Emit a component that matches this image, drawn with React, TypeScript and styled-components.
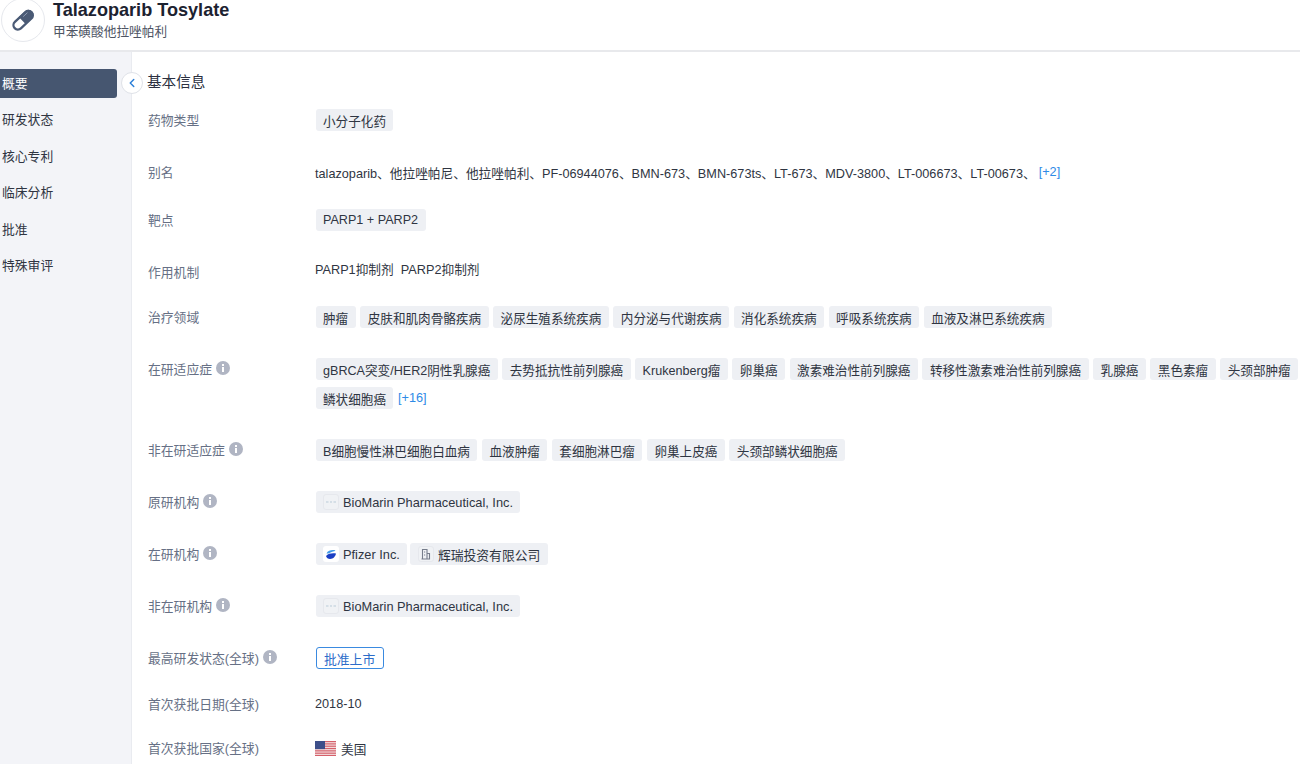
import React from "react";
import styled, {createGlobalStyle} from "styled-components";
import {ChevronLeft} from "lucide-react";

const GlobalStyles = createGlobalStyle`
  html, body {
    margin: 0;
    padding: 0;
    height: 100%;
    overflow: hidden;
    background: #fff;
    font-family: "Liberation Sans", "Noto Sans CJK SC", sans-serif;
  }
`;

const Page = styled.div`
  width: 1300px;
  height: 764px;
  overflow: hidden;
  display: flex;
  flex-direction: column;
`;

const Header = styled.header`
  height: 50px;
  flex: none;
  display: flex;
  align-items: flex-start;
  gap: 8px;
  padding-left: 1px;
  border-bottom: 2px solid #e8e9ec;
  overflow: hidden;
`;

const Avatar = styled.div`
  width: 44px;
  height: 44px;
  margin-top: -2px;
  flex: none;
  box-sizing: border-box;
  border-radius: 50%;
  border: 1px solid #e6e8ed;
  display: flex;
  align-items: center;
  justify-content: center;
`;

const HeaderText = styled.div`
  display: flex;
  flex-direction: column;
`;

const DrugName = styled.div`
  font-size: 18.1px;
  line-height: 20px;
  font-weight: 700;
  color: #1c2230;
`;

const DrugSub = styled.div`
  font-size: 12.7px;
  line-height: 16px;
  margin-top: 4px;
  color: #4d5463;
`;

const Body = styled.div`
  flex: 1;
  display: flex;
  min-height: 0;
`;

const Sidebar = styled.nav`
  width: 132px;
  flex: none;
  position: relative;
  box-sizing: border-box;
  background: #f3f4f8;
  padding: 17px 14px 0 0;
  display: flex;
  flex-direction: column;
  gap: 7.4px;
  border-right: 1px solid #e9ebf0;
`;

const NavItem = styled.div<{$active?: boolean}>`
  height: 29px;
  box-sizing: border-box;
  display: flex;
  align-items: center;
  padding: 0 0 2px 2px;
  font-size: 12.8px;
  border-radius: 0 3px 3px 0;
  color: ${p => (p.$active ? "#fff" : "#2f3542")};
  background: ${p => (p.$active ? "#465670" : "transparent")};
`;

const CollapseButton = styled.div`
  position: absolute;
  right: -12px;
  top: 20px;
  width: 22px;
  height: 22px;
  box-sizing: border-box;
  border-radius: 50%;
  background: #fff;
  border: 1px solid #dfe2e8;
  color: #2b7fd8;
  display: flex;
  align-items: center;
  justify-content: center;
`;

const Content = styled.main`
  flex: 1;
  min-width: 0;
  padding-left: 15px;
`;

const SectionTitle = styled.h2`
  margin: 0;
  height: 57px;
  box-sizing: border-box;
  padding-top: 21px;
  font-size: 14.6px;
  line-height: 18px;
  font-weight: 400;
  color: #2b3040;
`;

const Row = styled.div<{$h: number}>`
  height: ${p => p.$h}px;
  display: flex;
  align-items: flex-start;
`;

const Label = styled.div`
  width: 168.5px;
  flex: none;
  height: 20px;
  padding-left: 1px;
  box-sizing: border-box;
  display: flex;
  align-items: center;
  gap: 4px;
  font-size: 12.8px;
  color: #667085;
`;

const Values = styled.div<{$raise?: number; $gap?: number}>`
  flex: 1;
  min-width: 0;
  margin-top: ${p => -(p.$raise || 0)}px;
  display: flex;
  flex-wrap: wrap;
  align-items: center;
  gap: 7px ${p => p.$gap ?? 4.5}px;
`;

const Tag = styled.span`
  height: 22px;
  box-sizing: border-box;
  padding: 0 7.5px;
  border-radius: 3px;
  background: #eef0f4;
  display: inline-flex;
  align-items: center;
  gap: 4px;
  font-size: 12.6px;
  color: #2f3542;
  white-space: nowrap;
`;

const OrgTag = styled(Tag)`
  font-size: 12.8px;
`;

const PlainText = styled.span`
  height: 22px;
  margin-left: -0.5px;
  display: inline-flex;
  align-items: center;
  font-size: 12.7px;
  color: #2f3542;
  white-space: nowrap;
  gap: 5px;
`;

const MoreLink = styled.span`
  font-size: 12.7px;
  color: #2e8ae6;
`;

const InlineMore = styled(MoreLink)`
  margin-left: -2px;
`;

const StatusTag = styled.span`
  height: 22px;
  box-sizing: border-box;
  padding: 0 7.5px;
  border-radius: 3px;
  border: 1px solid #3a8ae0;
  display: inline-flex;
  align-items: center;
  font-size: 12.8px;
  color: #2c6cc9;
`;

const LogoBox = styled.span<{$white?: boolean}>`
  width: 16px;
  height: 16px;
  flex: none;
  border-radius: 3px;
  background: ${p => (p.$white ? "#fff" : "#f0f2f5")};
  border: ${p => (p.$white ? "none" : "1px solid #e6e8ed")};
  box-sizing: border-box;
  display: inline-flex;
  align-items: center;
  justify-content: center;
`;

function InfoIcon() {
    return (
        <svg width="14" height="14" viewBox="0 0 14 14">
            <circle cx="7" cy="7" r="7" fill="#b0b5c3"/>
            <rect x="6" y="3" width="2" height="2" fill="#fff"/>
            <rect x="6" y="6" width="2" height="5" fill="#fff"/>
        </svg>
    );
}

function PillIcon() {
    return (
        <svg width="26" height="26" viewBox="0 0 28 28">
            <g transform="rotate(-43 14 14)">
                <rect x="1.500" y="9.500" width="25" height="9.500" rx="4.750" fill="#fff" stroke="#4a5a75" strokeWidth="2.500"/>
                <path d="M13 8.500H22a5.500 5.500 0 0 1 0 11H13z" fill="#4a5a75"/>
                <path d="M17 11.500H22.500" stroke="#8d9ab0" strokeWidth="1" strokeLinecap="round"/>
            </g>
        </svg>
    );
}

function BioMarinLogo() {
    return (
        <LogoBox>
            <svg width="10" height="4" viewBox="0 0 10 4">
                <path d="M0 2h2.500M4 2h2M7.500 2h2.500" stroke="#b9cbd8" strokeWidth="1"/>
            </svg>
        </LogoBox>
    );
}

function PfizerLogo() {
    return (
        <LogoBox $white>
            <svg width="12" height="11" viewBox="0 0 12 11">
                <path d="M1.500 4.500C3 1 8 .5 10.500 1.500 9 2.500 7 2.800 5.500 3.500 4 4.200 3 4.800 1.500 4.500z" fill="#3f9be8"/>
                <path d="M1 7C3 4.500 7 4 11 4.500 10.500 7 8.500 10 5 10 3 10 1.500 8.700 1 7z" fill="#1a3fc4"/>
            </svg>
        </LogoBox>
    );
}

function BuildingLogo() {
    return (
        <LogoBox>
            <svg width="10" height="12" viewBox="0 0 10 12" fill="none" stroke="#767d8b" strokeWidth="1.100">
                <path d="M1.500 11V1.500h4.500V11M6 5.500h2.500V11H.5M3 4h1.200M3 7h1.200"/>
            </svg>
        </LogoBox>
    );
}

function UsFlag() {
    return (
        <svg width="21" height="15" viewBox="0 0 21 15">
            <rect width="21" height="15" fill="#f3dfe0"/>
            {[0, 2, 4, 6, 8, 10, 12].map(i => (
                <rect key={i} y={i * 1.16} width="21" height="1.160" fill="#d5606a"/>
            ))}
            <rect width="10" height="8.100" fill="#3d4f8a"/>
        </svg>
    );
}

const therapy = ["肿瘤", "皮肤和肌肉骨骼疾病", "泌尿生殖系统疾病", "内分泌与代谢疾病", "消化系统疾病", "呼吸系统疾病", "血液及淋巴系统疾病"];
const active = ["gBRCA突变/HER2阴性乳腺癌", "去势抵抗性前列腺癌", "Krukenberg瘤", "卵巢癌", "激素难治性前列腺癌", "转移性激素难治性前列腺癌", "乳腺癌", "黑色素瘤", "头颈部肿瘤", "鳞状细胞癌"];
const inactive = ["B细胞慢性淋巴细胞白血病", "血液肿瘤", "套细胞淋巴瘤", "卵巢上皮癌", "头颈部鳞状细胞癌"];
const nav = ["概要", "研发状态", "核心专利", "临床分析", "批准", "特殊审评"];

export default function App() {
    return (
        <Page>
            <GlobalStyles/>
            <Header>
                <Avatar><PillIcon/></Avatar>
                <HeaderText>
                    <DrugName>Talazoparib Tosylate</DrugName>
                    <DrugSub>甲苯磺酸他拉唑帕利</DrugSub>
                </HeaderText>
            </Header>
            <Body>
                <Sidebar>
                    {nav.map((n, i) => <NavItem key={n} $active={i === 0}>{n}</NavItem>)}
                    <CollapseButton><ChevronLeft size={14} strokeWidth={2.5}/></CollapseButton>
                </Sidebar>
                <Content>
                    <SectionTitle>基本信息</SectionTitle>
                    <Row $h={52}>
                        <Label>药物类型</Label>
                        <Values><Tag>小分子化药</Tag></Values>
                    </Row>
                    <Row $h={48}>
                        <Label>别名</Label>
                        <Values>
                            <PlainText>
                                talazoparib、他拉唑帕尼、他拉唑帕利、PF-06944076、BMN-673、BMN-673ts、LT-673、MDV-3800、LT-006673、LT-00673、
                                <InlineMore>[+2]</InlineMore>
                            </PlainText>
                        </Values>
                    </Row>
                    <Row $h={52}>
                        <Label>靶点</Label>
                        <Values><Tag>PARP1 + PARP2</Tag></Values>
                    </Row>
                    <Row $h={45}>
                        <Label>作用机制</Label>
                        <Values $raise={4}><PlainText>PARP1抑制剂&nbsp; PARP2抑制剂</PlainText></Values>
                    </Row>
                    <Row $h={52}>
                        <Label>治疗领域</Label>
                        <Values>{therapy.map(t => <Tag key={t}>{t}</Tag>)}</Values>
                    </Row>
                    <Row $h={81}>
                        <Label>在研适应症 <InfoIcon/></Label>
                        <Values>
                            {active.map(t => <Tag key={t}>{t}</Tag>)}
                            <MoreLink>[+16]</MoreLink>
                        </Values>
                    </Row>
                    <Row $h={52}>
                        <Label>非在研适应症 <InfoIcon/></Label>
                        <Values>{inactive.map(t => <Tag key={t}>{t}</Tag>)}</Values>
                    </Row>
                    <Row $h={52}>
                        <Label>原研机构 <InfoIcon/></Label>
                        <Values><OrgTag><BioMarinLogo/>BioMarin Pharmaceutical, Inc.</OrgTag></Values>
                    </Row>
                    <Row $h={52}>
                        <Label>在研机构 <InfoIcon/></Label>
                        <Values $gap={3}>
                            <OrgTag><PfizerLogo/>Pfizer Inc.</OrgTag>
                            <OrgTag><BuildingLogo/>辉瑞投资有限公司</OrgTag>
                        </Values>
                    </Row>
                    <Row $h={52}>
                        <Label>非在研机构 <InfoIcon/></Label>
                        <Values><OrgTag><BioMarinLogo/>BioMarin Pharmaceutical, Inc.</OrgTag></Values>
                    </Row>
                    <Row $h={46}>
                        <Label>最高研发状态(全球) <InfoIcon/></Label>
                        <Values><StatusTag>批准上市</StatusTag></Values>
                    </Row>
                    <Row $h={44}>
                        <Label>首次获批日期(全球)</Label>
                        <Values><PlainText>2018-10</PlainText></Values>
                    </Row>
                    <Row $h={30}>
                        <Label>首次获批国家(全球)</Label>
                        <Values><PlainText><UsFlag/>美国</PlainText></Values>
                    </Row>
                </Content>
            </Body>
        </Page>
    );
}
